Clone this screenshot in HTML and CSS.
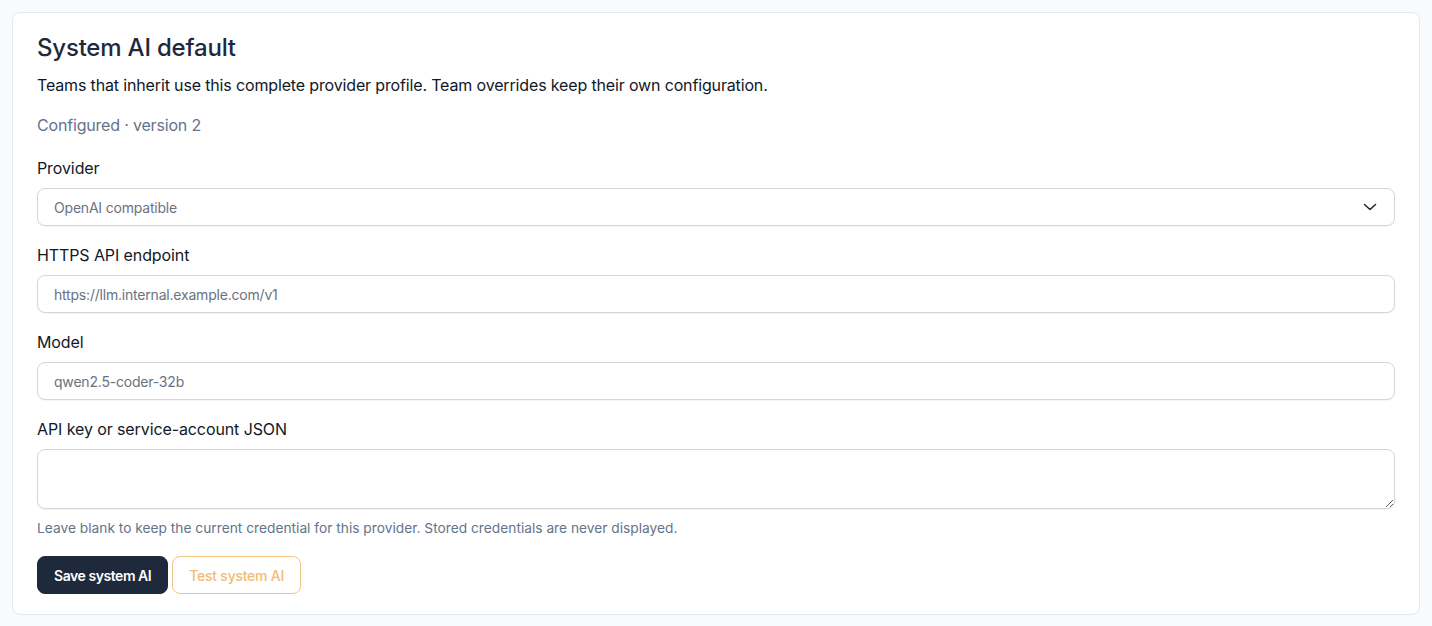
FILE: index.html
```html
<!DOCTYPE html>
<html lang="en">
<head>
<meta charset="utf-8">
<title>System AI default</title>
<link rel="stylesheet" href="styles.css">
</head>
<body>
<section class="card">
  <h2 class="title">System AI default</h2>
  <p class="desc">Teams that inherit use this complete provider profile. Team overrides keep their own configuration.</p>
  <p class="status">Configured · version 2</p>

  <div class="fields">
    <div class="field">
      <label class="label" for="provider">Provider</label>
      <div class="select-wrap">
        <select id="provider" class="control select">
          <option>OpenAI compatible</option>
        </select>
        <svg class="chevron" width="14" height="8" viewBox="0 0 14 8" aria-hidden="true"><path d="M1.5 1.5 7 6.5l5.5-5" fill="none" stroke="#1f2937" stroke-width="1.6" stroke-linecap="round" stroke-linejoin="round"/></svg>
      </div>
    </div>

    <div class="field">
      <label class="label" for="endpoint">HTTPS API endpoint</label>
      <input id="endpoint" class="control" type="text" value="https://llm.internal.example.com/v1">
    </div>

    <div class="field">
      <label class="label" for="model">Model</label>
      <input id="model" class="control" type="text" value="qwen2.5-coder-32b">
    </div>

    <div class="field">
      <label class="label" for="key">API key or service-account JSON</label>
      <textarea id="key" class="control textarea"></textarea>
      <p class="help">Leave blank to keep the current credential for this provider. Stored credentials are never displayed.</p>
    </div>
  </div>

  <div class="actions">
    <button class="btn btn-primary" type="button">Save system AI</button>
    <button class="btn btn-outline" type="button" disabled>Test system AI</button>
  </div>
</section>
</body>
</html>
```

FILE: styles.css
```css
* { box-sizing: border-box; }

html, body { height: 100%; }

body {
  margin: 0;
  padding: 12px;
  background: #f8fafc;
  font-family: Inter, "Noto Sans", Arial, sans-serif;
  color: #111827;
}

.card {
  background: #ffffff;
  border: 1px solid #e2e8f0;
  border-radius: 8px;
  padding: 19px 24px 20px;
}

.title {
  margin: 0;
  font-size: 24px;
  line-height: 32px;
  font-weight: 500;
  color: #1e293b;
  letter-spacing: -0.2px;
}

.desc {
  margin: 9px 0 0;
  font-size: 16px;
  line-height: 24px;
  color: #111827;
  letter-spacing: -0.15px;
}

.status {
  margin: 16px 0 0;
  font-size: 16px;
  line-height: 24px;
  color: #64748b;
  letter-spacing: -0.18px;
}

.fields {
  margin-top: 19px;
  display: flex;
  flex-direction: column;
  gap: 17px;
}

.field {
  display: flex;
  flex-direction: column;
}

.label {
  font-size: 16px;
  line-height: 24px;
  color: #111827;
  margin-bottom: 8px;
  letter-spacing: -0.1px;
}

.control {
  display: block;
  width: 100%;
  height: 38px;
  margin: 0;
  padding: 0 16px;
  border: 1px solid #d4d4dc;
  border-radius: 8px;
  background: #ffffff;
  font-family: Inter, "Noto Sans", Arial, sans-serif;
  font-size: 14px;
  letter-spacing: -0.2px;
  color: #6b7280;
  box-shadow: 0 1px 1px rgba(15, 23, 42, 0.04);
  outline: none;
}

.select-wrap {
  position: relative;
}

.select {
  appearance: none;
  -webkit-appearance: none;
  padding-right: 40px;
}

.chevron {
  position: absolute;
  right: 18px;
  top: 15px;
  pointer-events: none;
}

.textarea {
  height: 60px;
  padding: 10px 16px;
  resize: vertical;
}

.help {
  margin: 9px 0 0;
  font-size: 13.75px;
  line-height: 20px;
  color: #64748b;
}

.actions {
  margin-top: 18px;
  display: flex;
  gap: 4px;
}

.btn {
  height: 38px;
  padding: 0 16px;
  border-radius: 8px;
  font-family: Inter, "Noto Sans", Arial, sans-serif;
  font-size: 14px;
  font-weight: 600;
  letter-spacing: -0.45px;
  cursor: pointer;
}

.btn-primary {
  background: #1e293b;
  border: 1px solid #1e293b;
  color: #ffffff;
}

.btn-outline {
  background: #ffffff;
  border: 1px solid #f5c686;
  color: #f2bb74;
  font-weight: 500;
  letter-spacing: -0.25px;
}
```
